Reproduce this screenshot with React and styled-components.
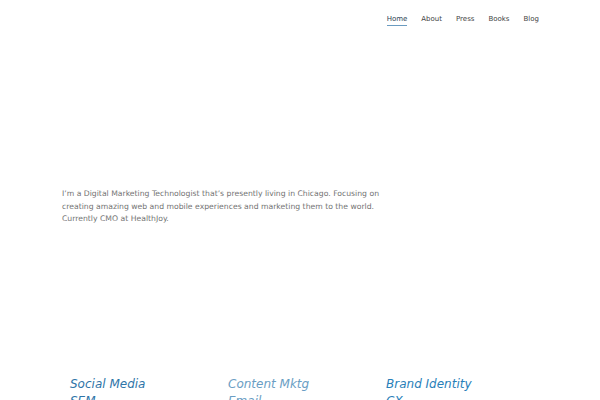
import React from 'react'
import styled, { createGlobalStyle } from 'styled-components'

const GlobalStyle = createGlobalStyle`
  html, body {
    margin: 0;
    padding: 0;
    background: #fff;
    font-family: "DejaVu Sans", Verdana, sans-serif;
  }
`

const Page = styled.div`
  width: 600px;
  height: 400px;
  overflow: hidden;
  display: flex;
  flex-direction: column;
`

const NavBar = styled.nav`
  display: flex;
  justify-content: flex-end;
  gap: 14px;
  padding: 15px 61px 0 0;
  height: 28px;
  box-sizing: border-box;
`

const NavItem = styled.a`
  font-size: 7px;
  line-height: 9px;
  color: ${p => (p.$active ? '#2e3f52' : '#444')};
  text-decoration: none;
  padding-bottom: 1px;
  height: 9px;
  border-bottom: 1px solid ${p => (p.$active ? '#6b9bc0' : 'transparent')};
`

const Intro = styled.p`
  margin: 162px 0 0 62px;
  width: 330px;
  font-size: 7.7px;
  line-height: 12.5px;
  color: #737373;
`

const Skills = styled.div`
  margin-top: 150px;
  padding-left: 70px;
  display: grid;
  grid-template-columns: repeat(3, 158px);
`

const SkillList = styled.ul`
  list-style: none;
  margin: 0;
  padding: 0;
`

const Skill = styled.li`
  font-size: 12px;
  font-style: italic;
  line-height: 17px;
  color: ${p => p.$color};
`

const columns = [
  { color: '#2f75a8', items: ['Social Media', 'SEM'] },
  { color: '#6a9ec4', items: ['Content Mktg', 'Email'] },
  { color: '#2980b9', items: ['Brand Identity', 'CX'] },
]

const App = () => {
  return (
    <Page>
      <GlobalStyle />
      <NavBar>
        <NavItem $active>Home</NavItem>
        <NavItem>About</NavItem>
        <NavItem>Press</NavItem>
        <NavItem>Books</NavItem>
        <NavItem>Blog</NavItem>
      </NavBar>
      <Intro>
        I’m a Digital Marketing Technologist that’s presently living in Chicago. Focusing on
        creating amazing web and mobile experiences and marketing them to the world.
        Currently CMO at HealthJoy.
      </Intro>
      <Skills>
        {columns.map(c => (
          <SkillList key={c.items[0]}>
            {c.items.map(i => <Skill key={i} $color={c.color}>{i}</Skill>)}
          </SkillList>
        ))}
      </Skills>
    </Page>
  )
}

export default App
